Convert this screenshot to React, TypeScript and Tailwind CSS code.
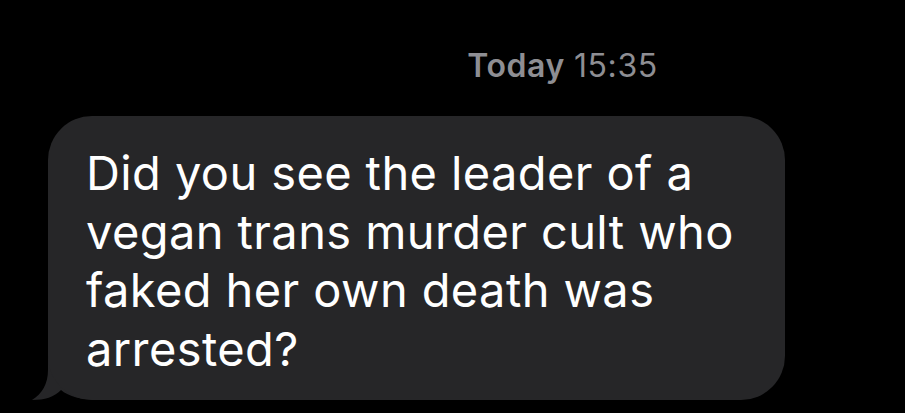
import React from "react";

export default function App() {
  return (
    <div
      className="w-[905px] h-[413px] bg-black overflow-hidden flex flex-col"
      style={{ fontFamily: "Inter, 'Liberation Sans', sans-serif" }}
    >
      <div className="pt-[47px] h-[86px] flex justify-center pl-[220px] text-[32px] leading-[38px] tracking-[0.6px] text-[#8e8e93]">
        <span className="font-semibold">Today</span>
        <span className="ml-[9px]">15:35</span>
      </div>
      <div className="relative ml-[48px] mt-[30px] w-[737px] h-[284px]">
        <svg
          className="absolute left-[-20px] top-[234px]"
          width="80"
          height="50"
          viewBox="28 350 80 50"
        >
          <path
            d="M48 350 L48 370 C48 384 42 394 32 400 C45 400 54 397 61 390 C68 396 80 400 100 400 L100 350 Z"
            fill="#262628"
          />
        </svg>
        <div className="relative w-full h-full rounded-[44px] bg-[#262628] pl-[38px] pt-[28px] text-white text-[47px] leading-[58.7px] tracking-[0.4px]">
          Did you see the leader of a
          <br />
          vegan trans murder cult who
          <br />
          faked her own death was
          <br />
          arrested?
        </div>
      </div>
    </div>
  );
}
